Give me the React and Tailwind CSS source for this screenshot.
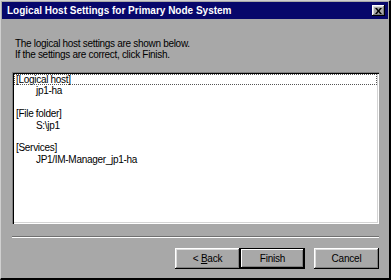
import React from "react";

const font = { fontFamily: '"Liberation Sans", Arial, sans-serif' };

const rows = [
  { text: "[Logical host]", focus: true },
  { text: "jp1-ha", indent: true },
  { text: "" },
  { text: "[File folder]" },
  { text: "S:\\jp1", indent: true },
  { text: "" },
  { text: "[Services]" },
  { text: "JP1/IM-Manager_jp1-ha", indent: true },
];

const raised =
  "shadow-[inset_-1px_-1px_#000,inset_1px_1px_#fff,inset_-2px_-2px_#808080,inset_2px_2px_#dcdcdc]";

const Button = ({ children, isDefault }) => (
  <button
    className={
      isDefault
        ? "w-[65px] h-[21px] bg-[#a8a8a8] text-[10px] tracking-[-0.2px] text-black border border-black shadow-[inset_-1px_-1px_#000,inset_1px_1px_#fff,inset_-2px_-2px_#808080]"
        : `w-[65px] h-[21px] bg-[#a8a8a8] text-[10px] tracking-[-0.2px] text-black ${raised}`
    }
  >
    {children}
  </button>
);

export default function App() {
  return (
    <div
      className="w-[391px] h-[280px] bg-[#a8a8a8] border-t border-l border-[#d0d0d0] border-r-2 border-r-black border-b-2 border-b-black flex flex-col overflow-hidden"
      style={font}
    >
      {/* Title bar */}
      <div className="mx-px mt-px h-[17px] bg-[#07076b] flex items-center justify-between pl-[5px] pr-[3px]">
        <span className="text-white text-[10px] font-bold leading-none">
          Logical Host Settings for Primary Node System
        </span>
        <div className={`w-[13px] h-[11px] bg-[#a8a8a8] flex items-center justify-center ${raised}`}>
          <svg width="7" height="6" viewBox="0 0 7 6">
            <path d="M0 0h2l1.5 2L5 0h2L4.5 3 7 6H5L3.5 4 2 6H0l2.5-3z" fill="#000" />
          </svg>
        </div>
      </div>

      {/* Instructions */}
      <div className="pl-[14px] pt-[19px] text-[10px] tracking-[-0.3px] leading-[11px] text-black">
        <p>The logical host settings are shown below.</p>
        <p>If the settings are correct, click Finish.</p>
      </div>

      {/* List box */}
      <div className="ml-[11px] mt-[12px] w-[367px] h-[152px] bg-white p-[2px] shadow-[inset_1px_1px_#808080,inset_2px_2px_#000,inset_-1px_-1px_#fff,inset_-2px_-2px_#d4d4d4]">
        {rows.map((row, i) => (
          <div
            key={i}
            className={
              row.focus
                ? "h-[11.4px] text-[10px] tracking-[-0.3px] leading-[11.4px] text-black pl-[2px] outline-1 outline-dotted outline-[#555] -outline-offset-1"
                : "h-[11.4px] text-[10px] tracking-[-0.3px] leading-[11.4px] text-black pl-[2px]"
            }
          >
            <span className={row.indent ? "pl-[20px]" : ""}>{row.text}</span>
          </div>
        ))}
      </div>

      {/* Separator */}
      <div className="ml-[11px] mt-[12px] w-[367px] h-[2px] border-t border-[#707070] border-b border-b-white" />

      {/* Buttons */}
      <div className="ml-[174px] mt-[10px] flex">
        <Button>
          &lt; <span className="underline">B</span>ack
        </Button>
        <Button isDefault>Finish</Button>
        <div className="w-[9px]" />
        <Button>Cancel</Button>
      </div>
    </div>
  );
}
